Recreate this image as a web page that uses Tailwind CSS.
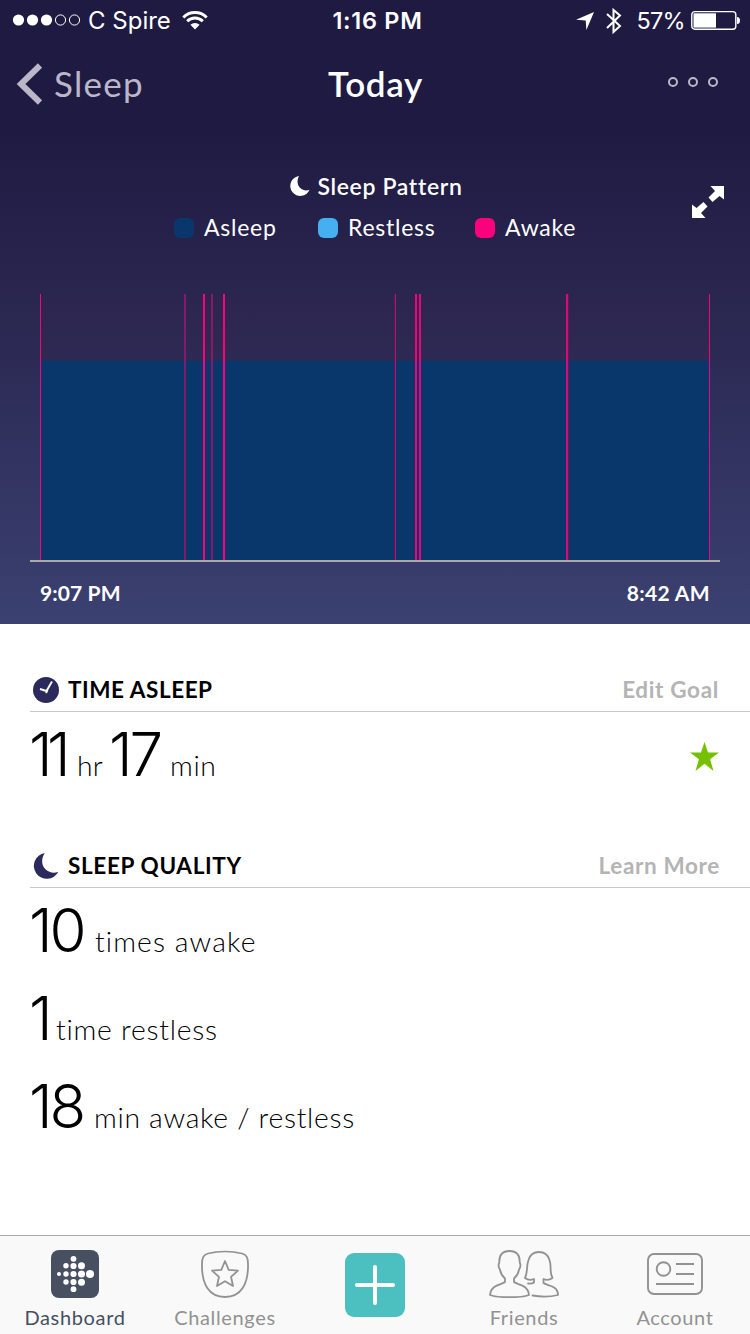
<!DOCTYPE html>
<html lang="en">
<head>
    <meta charset="UTF-8">
    <meta name="viewport" content="width=device-width, initial-scale=1.0">
    <title>Sleep - Today</title>
    <script src="https://cdn.jsdelivr.net/npm/@tailwindcss/browser@4"></script>
</head>
<body class="w-[750px] h-[1334px] flex flex-col overflow-hidden bg-white font-[Lato,sans-serif] text-black whitespace-nowrap">
    <section class="h-[624px] shrink-0 flex flex-col bg-linear-to-b from-[#1f1a41] from-20% via-[#2a2751] via-50% to-[#3b4171] text-white">
        <!-- Status bar -->
        <div class="h-10 shrink-0 grid grid-cols-3 items-center pt-0.5 pl-3 pr-[11px] font-[Inter,sans-serif] text-2xl leading-[38px]">
            <div class="flex items-center">
                <svg class="w-[70px] h-4 -mt-0.5" viewBox="0 0 70 16" fill="#fff">
                    <circle cx="6.5" cy="8" r="5.6"/><circle cx="20.5" cy="8" r="5.6"/><circle cx="34.5" cy="8" r="5.6"/>
                    <g fill="none" stroke="#fff"><circle cx="48.5" cy="8" r="5.1"/><circle cx="62.5" cy="8" r="5.1"/></g>
                </svg>
                <span class="ml-1.5">C Spire</span>
                <svg class="ml-[11px] -mt-0.5 w-[26px] h-[19px]" viewBox="0 0 26 19" fill="none" stroke="#fff" stroke-width="2.9">
                    <path d="M1.3 6.4a16.5 16.5 0 0 1 23.4 0"/>
                    <path d="M5.2 10.3a11 11 0 0 1 15.6 0"/>
                    <path d="M13 18.5l-4.6-4.7a6.5 6.5 0 0 1 9.2 0z" fill="#fff" stroke="none"/>
                </svg>
            </div>
            <div class="pl-1 text-center font-semibold text-[23.5px] tracking-[0.7px]">1:16 PM</div>
            <div class="flex items-center justify-end">
                <svg class="w-[18px] h-[18px]" viewBox="0 0 18 18" fill="#fff"><path d="M18 0L10.400 18 9.700 8.600 0 7.800z"/></svg>
                <svg class="ml-3 w-4 h-7" viewBox="0 0 16 28" fill="none" stroke="#fff" stroke-width="2"><path d="M1 7l13 12-6.500 6V3L14 8.500 1 21"/></svg>
                <span class="ml-3.5 text-[23.500px] tracking-[-0.7px]">57%</span>
                <svg class="ml-1.5 -mr-0.5 w-[50px] h-5 -mt-0.5" viewBox="0 0 50 20">
                    <rect x=".8" y="1.600" width="44" height="17.600" rx="3" fill="none" stroke="#fff" stroke-width="1.400"/>
                    <rect x="2.500" y="3.300" width="22.500" height="14.300" fill="#fff"/>
                    <path d="M46 7q3 0 3 3.500t-3 3.500z" fill="#fff"/>
                </svg>
            </div>
        </div>
        <!-- Navigation -->
        <nav class="h-[88px] shrink-0 grid grid-cols-3 items-center pl-4 pr-[31px]">
            <div class="flex items-center text-[#bbb7c9]">
                <svg class="w-[27px] h-[42px]" viewBox="0 0 27 42"><path d="M24 2.500L5 21l19 18.500" fill="none" stroke="currentColor" stroke-width="6"/></svg>
                <span class="ml-[11px] -mt-0.5 text-[35px] leading-10 tracking-[1.300px]">Sleep</span>
            </div>
            <h1 class="-mt-0.5 pl-4 text-center text-[35px] leading-10 font-semibold tracking-[0.7px]">Today</h1>
            <svg class="justify-self-end -mt-1 w-[52px] h-3" viewBox="0 0 52 12" fill="none" stroke="#bbb7c9" stroke-width="2"><circle cx="6" cy="6" r="4"/><circle cx="26" cy="6" r="4"/><circle cx="46" cy="6" r="4"/></svg>
        </nav>
        <!-- Pattern title and legend -->
        <div class="relative h-[166px] shrink-0 pt-[42px]">
            <div class="flex h-8 items-center justify-center pl-0.5">
                <svg class="w-5 h-5" viewBox="0 0 20 20" fill="#fff"><path d="M9 0A10 10 0 1 0 19.500 13.800C13 16.700 4 10 9 0z"/></svg>
                <h2 class="ml-2 text-[23px] font-semibold tracking-[0.65px]">Sleep Pattern</h2>
            </div>
            <div class="mt-[9px] flex h-8 items-center pl-[174px] text-[23px] tracking-[0.75px]">
                <span class="mt-0.5 w-5 h-5 rounded-md bg-[#09376b]"></span><span class="ml-2.5 w-[114px]">Asleep</span>
                <span class="mt-0.5 w-5 h-5 rounded-md bg-[#46aff0]"></span><span class="ml-2.5 w-[127px]">Restless</span>
                <span class="mt-0.5 w-5 h-5 rounded-md bg-[#ff007d]"></span><span class="ml-2.5">Awake</span>
            </div>
            <svg class="absolute right-[26px] top-[58px] w-8 h-8" viewBox="0 0 32 32" fill="#fff">
                <path d="M18.500 0H32v13.500l-4.500-3.500-7 6-4-4.500L23 5z"/>
                <path d="M13.500 32H0V18.500L4.500 22l7-6 4 4.500L9 27z"/>
            </svg>
        </div>
        <!-- Chart -->
        <svg class="ml-[30px] w-[690px] h-[268px] shrink-0" viewBox="0 0 690 268" shape-rendering="crispEdges">
            <rect x="10" width="670" height="67" fill="#50204a" fill-opacity=".06"/>
            <rect x="10" y="66" width="670" height="1" fill="#1b3160"/>
            <rect x="10" y="67" width="670" height="200" fill="#09376b"/>
            <g fill="#ff007d">
                <rect x="10" width="1" height="267"/>
                <rect x="154" width="2" height="267" fill="#84196f"/>
                <rect x="173" width="2" height="267"/>
                <rect x="181" width="2" height="267" fill="#911569"/>
                <rect x="193" width="2" height="267"/>
                <rect x="364" width="1" height="267" fill="#452253"/>
                <rect x="365" width="1" height="267" fill="#c40b75"/>
                <rect x="385" width="2" height="267" fill="#f5007d"/>
                <rect x="389" width="2" height="267" fill="#e8067c"/>
                <rect x="536" width="2" height="267" fill="#dc087a"/>
                <rect x="538" width="1" height="267" fill="#501f5c"/>
                <rect x="679" width="1" height="267" fill="#f0057b"/>
            </g>
            <rect y="266" width="690" height="2" fill="#aaa"/>
        </svg>
        <div class="flex justify-between px-10 pt-4 text-[21px] leading-[30px] font-bold">
            <span class="tracking-[0.1px]">9:07 PM</span><span class="tracking-[0.35px]">8:42 AM</span>
        </div>
    </section>

    <!-- Details -->
    <main class="flex-1 pl-[30px]">
        <section class="h-[176px] pt-11">
            <div class="h-11 flex items-center border-b border-[#c8c8c8] pl-[3px] pr-[31px]">
                <svg class="w-[26px] h-[26px]" viewBox="0 0 26 26"><circle cx="13" cy="13" r="13" fill="#2c2a5c"/><path d="M7 12l6.500 2L19 4.500M13 16l1.500-3" fill="none" stroke="#fff" stroke-width="1.900"/></svg>
                <h3 class="ml-[9px] text-[22.500px] font-bold tracking-[0.55px]">TIME ASLEEP</h3>
                <a class="ml-auto text-[22.500px] font-bold tracking-[0.650px] text-[#b4b4b4]">Edit Goal</a>
            </div>
            <div class="flex h-[88px] pr-[31px]">
                <p class="flex items-baseline -ml-px -mt-px text-[28.300px] font-light tracking-[0.2px]">
                    <b class="w-12 font-[Inter] text-[60px] leading-[86px] font-light tracking-[-5.500px]">11</b><span class="w-8">hr</span>
                    <b class="w-[61px] font-[Inter] text-[60px] leading-[86px] font-light tracking-[-3px]">17</b><span class="tracking-[0.6px]">min</span>
                </p>
                <svg class="ml-auto mt-[30px] w-[29px] h-[29px]" viewBox="0 0 28 28" fill="#76c000"><path d="M14 0l3.400 10.200H28l-8.600 6.500L22.700 28 14 21.100 5.300 28l3.300-11.300L0 10.200h10.600z"/></svg>
            </div>
        </section>
        <section class="pt-11">
            <div class="h-11 flex items-center border-b border-[#c8c8c8] pl-[3px] pr-[30px]">
                <svg class="w-[26px] h-[26px]" viewBox="0 0 20 20" fill="#2c2a5c"><path d="M9 0A10 10 0 1 0 19.500 14.500C12 17.500 3 10 9 0z"/></svg>
                <h3 class="ml-[9px] text-[22.500px] font-bold tracking-[0.65px]">SLEEP QUALITY</h3>
                <a class="ml-auto text-[22.500px] font-bold tracking-[0.650px] text-[#b4b4b4]">Learn More</a>
            </div>
            <div class="-ml-px -mt-px text-[28.300px] font-light">
                <p class="flex h-[88px] items-baseline tracking-[1.1px]"><b class="w-[66px] font-[Inter] text-[60px] leading-[86px] font-light tracking-[-3px]">10</b>times awake</p>
                <p class="flex h-[88px] items-baseline tracking-[0.75px]"><b class="w-[27px] font-[Inter] text-[60px] leading-[86px] font-light tracking-[-3px]">1</b>time restless</p>
                <p class="flex h-[88px] items-baseline tracking-[0.7px]"><b class="w-[65px] font-[Inter] text-[60px] leading-[86px] font-light tracking-[-3px]">18</b>min awake / restless</p>
            </div>
        </section>
    </main>

    <!-- Tab bar -->
    <footer class="h-[99px] shrink-0 grid grid-cols-5 border-t border-[#aaa] bg-[#f9f9f9] text-[20px] leading-6 tracking-[0.650px] text-[#929292]">
        <div class="flex flex-col items-center pt-3.5 text-[#465061]">
            <svg class="w-12 h-12" viewBox="0 0 48 48">
                <rect width="48" height="48" rx="8" fill="#465061"/>
                <g fill="#fff">
                    <circle cx="8" cy="24" r="2"/>
                    <circle cx="15" cy="15.800" r="2.700"/><circle cx="15" cy="24" r="2.700"/><circle cx="15" cy="32" r="2.700"/>
                    <circle cx="22.500" cy="8.800" r="2.900"/><circle cx="22.500" cy="16" r="3.100"/><circle cx="22.500" cy="24" r="3.100"/><circle cx="22.500" cy="32" r="3.100"/><circle cx="22.500" cy="39.200" r="2.900"/>
                    <circle cx="30.500" cy="15.800" r="3.500"/><circle cx="30.500" cy="24" r="3.500"/><circle cx="30.500" cy="32.200" r="3.500"/>
                    <circle cx="39" cy="24" r="4"/>
                </g>
            </svg>
            <span class="mt-[7px]">Dashboard</span>
        </div>
        <div class="flex flex-col items-center pt-3.5">
            <svg class="w-12 h-12" viewBox="0 0 48 48" fill="none" stroke="#929292" stroke-width="1.800" stroke-linejoin="round">
                <path d="M1 14C1 8 2 5 7 3.500C17 1 31 1 41 3.500C46 5 47 8 47 14C47.500 34 40 47 24 47S.5 34 1 14z"/>
                <path d="M24 11l3.700 8.800 9.300.8-7 6.200 2 9.200-8-4.800-8 4.800 2-9.200-7-6.200 9.300-.8z"/>
            </svg>
            <span class="mt-[7px]">Challenges</span>
        </div>
        <div class="flex justify-center pt-[17px]">
            <svg class="w-[60px] h-16" viewBox="0 0 60 64"><rect width="60" height="64" rx="9" fill="#4cc0c1"/><path d="M12 32h36M30 14v36" stroke="#fff" stroke-width="4" stroke-linecap="round"/></svg>
        </div>
        <div class="flex flex-col items-center pt-3.5 pr-0.5">
            <svg class="w-[70px] h-12" viewBox="0 0 70 48" fill="none" stroke="#929292" stroke-width="1.800" stroke-linejoin="round" stroke-linecap="round">
                <path d="M16 28.500C13 26 11.500 23 11 19.500Q8.500 16 10.300 12.500C10 5 13.500 1 20.500 1S31 5 30.700 12.500Q32.500 16 30 19.500C29.500 23 28 26 25 28.500V32C28 35 39 34 40 45C32 48 9 48 1 45C2 34 13 35 16 32z"/>
                <path d="M39 33.500Q43 34 45 32.500V29Q40 31 36 28C39 22 37 17 39.500 10C41 5 44 2 50 2S59 5 60.500 10C63 17 60 22 63.500 28Q59 31 54.500 29V33C58 36 69 35 69 45Q57 48 43.500 45.500"/>
            </svg>
            <span class="mt-[7px]">Friends</span>
        </div>
        <div class="flex flex-col items-center pt-3.5">
            <svg class="w-14 h-12" viewBox="0 0 56 48" fill="none" stroke="#929292" stroke-width="1.900"><rect x="1" y="4" width="54" height="40" rx="6"/><circle cx="16.500" cy="19" r="6.800"/><path d="M29 14h18M29 24h18M9 34h38"/></svg>
            <span class="mt-[7px]">Account</span>
        </div>
    </footer>
</body>
</html>
